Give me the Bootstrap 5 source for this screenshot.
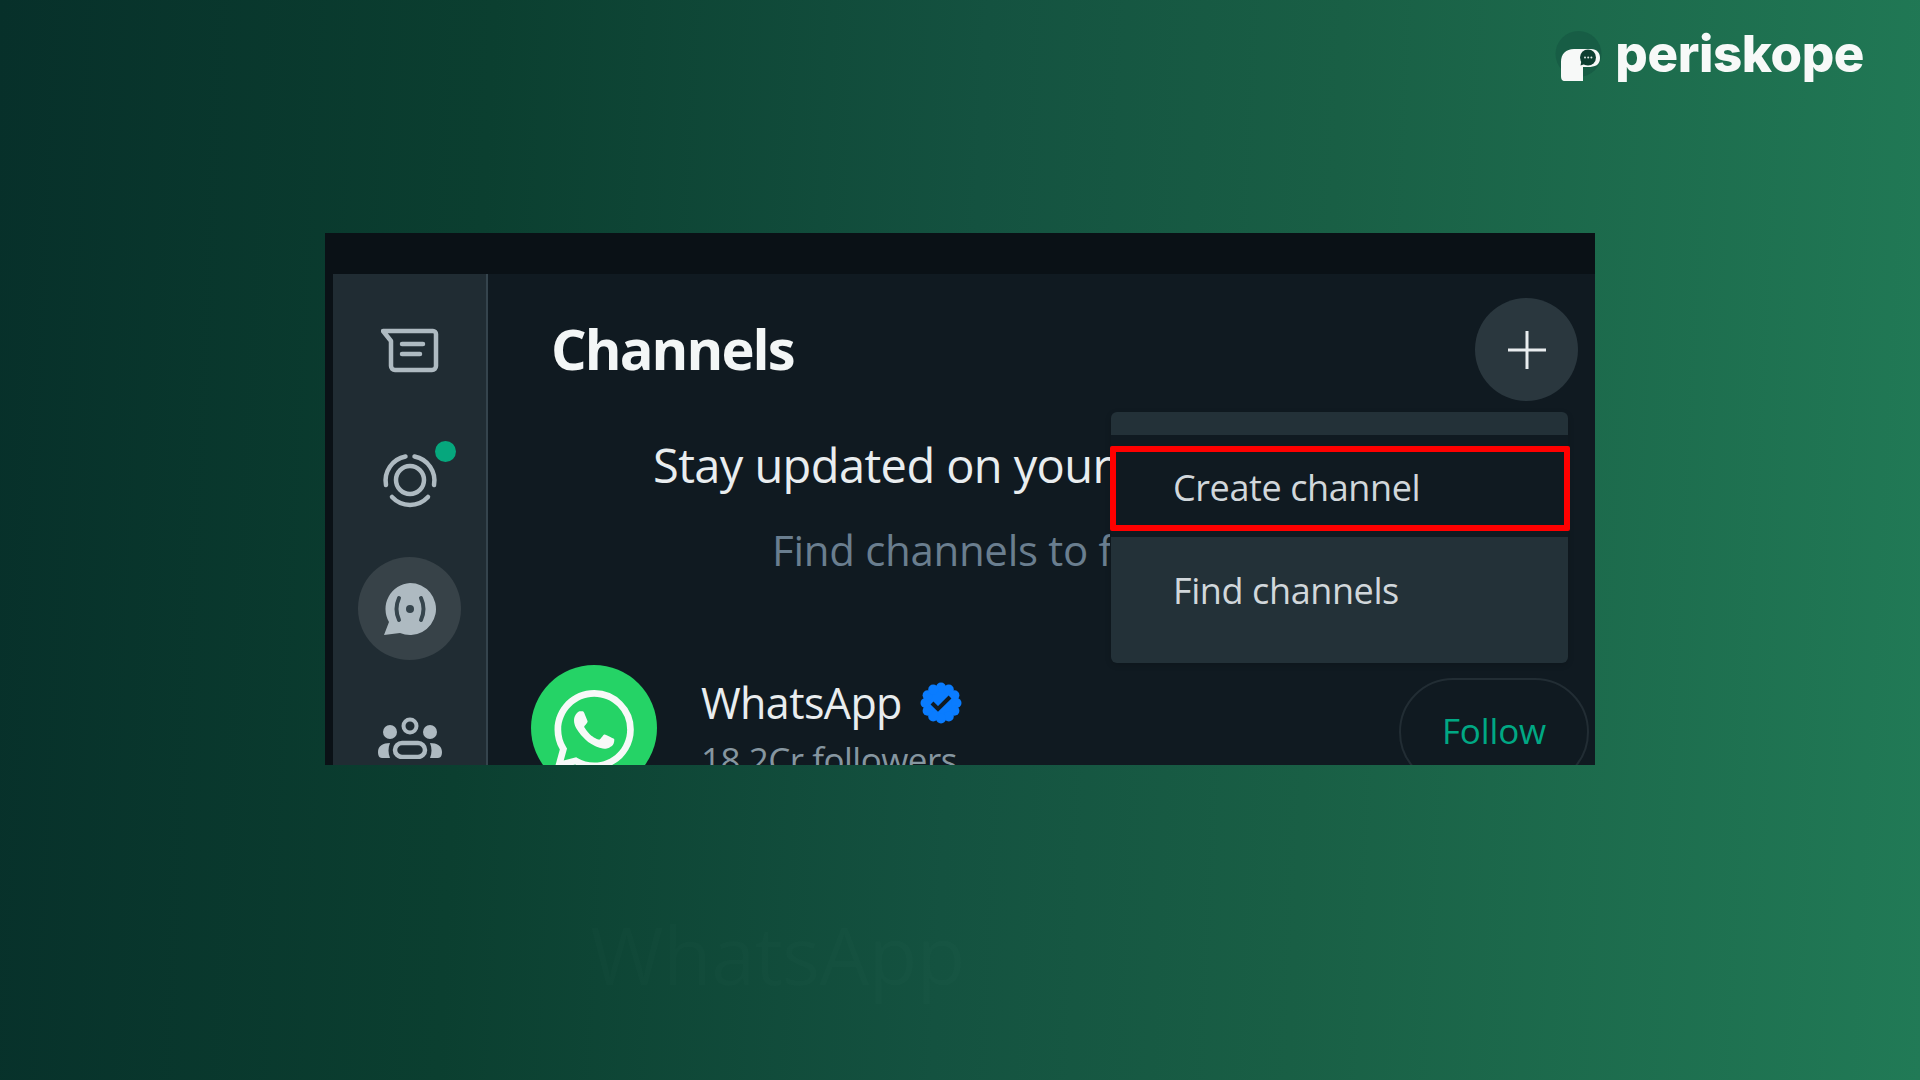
<!DOCTYPE html>
<html lang="en">
<head>
<meta charset="utf-8">
<title>Periskope - Create channel</title>
<link href="https://cdn.jsdelivr.net/npm/bootstrap@5.3.0/dist/css/bootstrap.min.css" rel="stylesheet">
<style>
html,body{height:100%}
body.stage{height:1080px;overflow:hidden;position:relative;background:linear-gradient(93deg,#07302a 0%,#0b3f30 25%,#145240 50%,#195f45 68%,#217a56 100%);font-family:"Open Sans","Noto Sans",sans-serif}
.brand-bar{height:233px;padding:25px 56px 0 0}
.brand-name{font-family:Inter,"Liberation Sans",sans-serif;font-weight:800;font-size:51px;line-height:58px;letter-spacing:-.4px;color:#f7f9f8}
.brand-mark{width:70px;height:65px;margin-right:-6px}
.app-win{width:1270px;height:532px;background:#0a1116;overflow:hidden;position:relative}
.app-top{height:41px}
.app-body{padding-left:8px;height:491px}
.rail{width:155px;background:#202c33;border-right:2px solid #35444d;padding-top:25px;gap:26px}
.rail-item{width:103px;height:103px;flex:none;position:relative}
.rail-item.on{background:#374248}
.status-dot{position:absolute;width:21px;height:21px;right:5px;top:13px;background:#06a77d}
.pane{background:#101a21;min-width:0;position:relative}
.pane-head{padding:24px 17px 0 63px;height:161px}
.pane-title{font-size:56px;font-weight:700;color:#f3f6f6;letter-spacing:-1.9px;line-height:1;margin:22px 0 0}
.add-btn{width:103px;height:103px;background:#2a373e;border:0;padding:0}
.intro-wrap{width:622px;overflow:hidden}
.intro-a{font-size:47px;line-height:60px;color:#e9edef;margin:0;letter-spacing:-.6px;white-space:nowrap;padding-left:165px}
.intro-b{font-size:42px;line-height:60px;color:#6a7e8f;margin:25px 0 0;letter-spacing:-.3px;white-space:nowrap;padding-left:284px}
.feed-row{padding:85px 6px 0 43px}
.wa-disc{width:126px;height:126px;background:#25d366;flex:none;padding:25px 23px 0}
.feed-meta{margin-left:44px;padding-top:11px}
.feed-name{font-size:43px;line-height:54px;color:#e9edef;letter-spacing:-.6px;gap:18px}
.feed-count{font-size:35px;line-height:44px;color:#8696a0;letter-spacing:-.5px;margin-top:8px}
.follow-pill{width:190px;height:108px;border:2px solid #222d34;color:#00a884;background:transparent;font-size:35px;margin-top:13px;padding:0 0 2px;letter-spacing:-.15px}
.plus-menu{position:absolute;left:623px;top:138px;width:457px;height:251px;background:#233138;border-radius:6px;padding:23px 0;box-shadow:0 2px 6px rgba(0,0,0,.15)}
.plus-menu .item-line{height:102px;padding:3px 0 0 62px;font-size:36px;color:#d1d7db;display:flex;align-items:center;letter-spacing:-.4px}
.plus-menu .item-line.hot{background:#101a21}
.plus-menu .item-line.cold{padding-top:5px}
.red-mark{position:absolute;left:-1px;right:-2px;top:34px;height:85px;border:6px solid #f00;border-radius:2px;pointer-events:none}
.ghost-word{position:absolute;left:590px;top:910px;font-size:80px;color:rgba(255,255,255,.01);letter-spacing:-1px;line-height:1.1;user-select:none}
</style>
</head>
<body class="stage">
<div class="ghost-word" aria-hidden="true">WhatsApp</div>

<header class="brand-bar d-flex justify-content-end align-items-start">
  <svg class="brand-mark" viewBox="0 0 70 65" aria-label="Periskope logo">
    <circle cx="27.5" cy="29" r="23" fill="#175d45"/>
    <path d="M10 37C10 29 15 24 23 24H40C46 24 49 28 49 33C49 40 44 42 37 42H32V56H14C11 56 10 54 10 51Z" fill="#f7f9f8"/>
    <circle cx="37" cy="32.5" r="8" fill="#0e3f31"/>
    <path d="M29.5 40.5l1-5 5 3z" fill="#0e3f31"/>
    <circle cx="34" cy="32.5" r="1" fill="#dfe9e4"/><circle cx="37.2" cy="32.5" r="1" fill="#dfe9e4"/><circle cx="40.4" cy="32.5" r="1" fill="#dfe9e4"/>
  </svg>
  <span class="brand-name">periskope</span>
</header>

<main class="app-win mx-auto">
  <div class="app-top"></div>
  <div class="app-body d-flex">
    <nav class="rail d-flex flex-column align-items-center flex-shrink-0">
      <div class="rail-item d-flex align-items-center justify-content-center">
        <svg width="58" height="45" viewBox="0 0 58 45" fill="none" stroke="#aebac1" stroke-width="4.5" stroke-linejoin="round" stroke-linecap="round">
          <path d="M2 3H52a3 3 0 0 1 3 3V38a4 4 0 0 1-4 4H14a4 4 0 0 1-4-4V13Z"/>
          <path d="M21 16H42M21 26H39"/>
        </svg>
      </div>
      <div class="rail-item d-flex align-items-center justify-content-center">
        <svg width="60" height="60" viewBox="-30 -30 60 60" fill="none" stroke="#aebac1" stroke-width="4.5" stroke-linecap="round">
          <circle r="14"/>
          <path d="M-24 5A24.5 24.5 0 0 1-4.5-23.5M4.5-23.5A24.5 24.5 0 0 1 24 5M-18 17A24.5 24.5 0 0 0 18 17"/>
        </svg>
        <span class="status-dot rounded-circle"></span>
      </div>
      <div class="rail-item on rounded-circle d-flex align-items-center justify-content-center">
        <svg width="60" height="60" viewBox="-30 -30 60 60">
          <path d="M0-26A26 26 0 1 1-10 24L-26 26-21 13A26 26 0 0 1 0-26Z" fill="#aebac1"/>
          <circle r="4" fill="#36454d"/>
          <path d="M-11-11Q-16 0-11 11M11-11Q16 0 11 11" fill="none" stroke="#36454d" stroke-width="4" stroke-linecap="round"/>
        </svg>
      </div>
      <div class="rail-item d-flex align-items-center justify-content-center">
        <svg width="66" height="42" viewBox="0 0 66 42" fill="#aebac1">
          <circle cx="33" cy="9" r="6.5" fill="none" stroke="#aebac1" stroke-width="4"/>
          <circle cx="13" cy="15" r="7"/><circle cx="53" cy="15" r="7"/>
          <rect x="18" y="26" width="30" height="14" rx="7" fill="none" stroke="#aebac1" stroke-width="4.5"/>
          <path d="M13 26C6 26 1 29 1 35C1 38 2 41 5 41H13C11 36 11 31 13 26Z"/>
          <path d="M53 26C60 26 65 29 65 35C65 38 64 41 61 41H53C55 36 55 31 53 26Z"/>
        </svg>
      </div>
    </nav>

    <section class="pane flex-grow-1">
      <div class="pane-head d-flex justify-content-between align-items-start">
        <h1 class="pane-title">Channels</h1>
        <button class="add-btn rounded-circle d-flex align-items-center justify-content-center" aria-label="New">
          <svg width="38" height="38" viewBox="0 0 38 38" stroke="#e9edef" stroke-width="3"><path d="M19 0V38M0 19H38"/></svg>
        </button>
      </div>
      <div class="intro-wrap">
        <p class="intro-a">Stay updated on your</p>
        <p class="intro-b">Find channels to follow</p>
      </div>
      <div class="feed-row d-flex align-items-start">
        <div class="wa-disc rounded-circle">
          <svg width="80" height="80" viewBox="0 0 24 24" fill="#f7f9f8"><path d="M17.472 14.382c-.297-.149-1.758-.867-2.03-.967-.273-.099-.471-.148-.67.15-.197.297-.767.966-.94 1.164-.173.199-.347.223-.644.075-.297-.15-1.255-.463-2.39-1.475-.883-.788-1.48-1.761-1.653-2.059-.173-.297-.018-.458.13-.606.134-.133.298-.347.446-.52.149-.174.198-.298.298-.497.099-.198.05-.371-.025-.52-.075-.149-.669-1.612-.916-2.207-.242-.579-.487-.5-.669-.51-.173-.008-.371-.01-.57-.01-.198 0-.52.074-.792.372-.272.297-1.04 1.016-1.04 2.479 0 1.462 1.065 2.875 1.213 3.074.149.198 2.096 3.2 5.077 4.487.709.306 1.262.489 1.694.625.712.227 1.36.195 1.871.118.571-.085 1.758-.719 2.006-1.413.248-.694.248-1.289.173-1.413-.074-.124-.272-.198-.57-.347m-5.421 7.403h-.004a9.87 9.87 0 01-5.031-1.378l-.361-.214-3.741.982.998-3.648-.235-.374a9.86 9.86 0 01-1.51-5.26c.001-5.45 4.436-9.884 9.888-9.884 2.64 0 5.122 1.03 6.988 2.898a9.825 9.825 0 012.893 6.994c-.003 5.45-4.437 9.884-9.885 9.884m8.413-18.297A11.815 11.815 0 0012.05 0C5.495 0 .16 5.335.157 11.892c0 2.096.547 4.142 1.588 5.945L.057 24l6.305-1.654a11.882 11.882 0 005.683 1.448h.005c6.554 0 11.89-5.335 11.893-11.893a11.821 11.821 0 00-3.48-8.413z"/></svg>
        </div>
        <div class="feed-meta flex-grow-1">
          <div class="feed-name d-flex align-items-center">WhatsApp
            <svg width="42" height="42" viewBox="-21 -21 42 42"><g fill="#0a7cff"><circle r="16.5"/><circle cx="0" cy="-15.5" r="5"/><circle cx="7.8" cy="-13.4" r="5"/><circle cx="13.4" cy="-7.8" r="5"/><circle cx="15.5" cy="0" r="5"/><circle cx="13.4" cy="7.8" r="5"/><circle cx="7.8" cy="13.4" r="5"/><circle cx="0" cy="15.5" r="5"/><circle cx="-7.8" cy="13.4" r="5"/><circle cx="-13.4" cy="7.8" r="5"/><circle cx="-15.5" cy="0" r="5"/><circle cx="-13.4" cy="-7.8" r="5"/><circle cx="-7.8" cy="-13.4" r="5"/></g><path d="M-9 0L-3 6 9-6" fill="none" stroke="#101a21" stroke-width="4"/></svg>
          </div>
          <div class="feed-count">18.2Cr followers</div>
        </div>
        <button class="follow-pill rounded-pill flex-shrink-0">Follow</button>
      </div>
      <div class="plus-menu">
        <div class="item-line hot">Create channel</div>
        <div class="item-line cold">Find channels</div>
        <div class="red-mark"></div>
      </div>
    </section>
  </div>
</main>
</body>
</html>
